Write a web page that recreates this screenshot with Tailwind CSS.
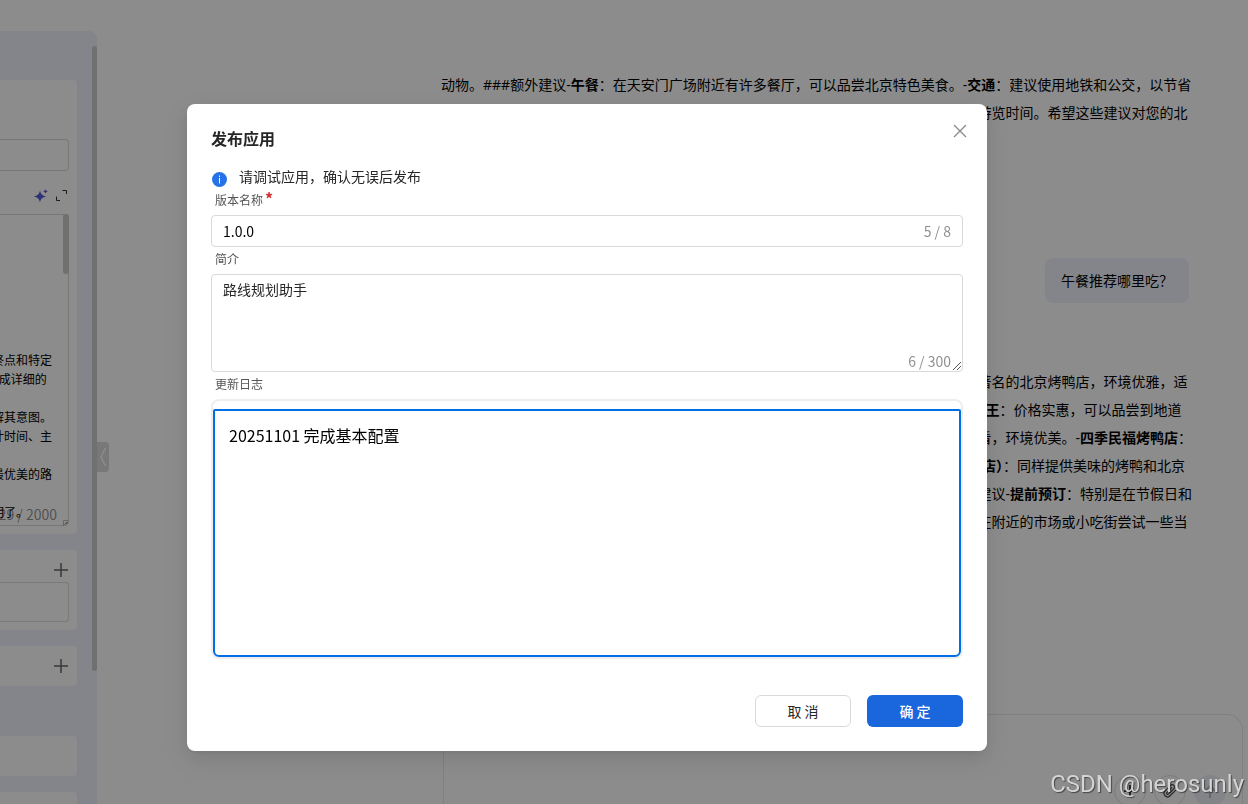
<!DOCTYPE html>
<html lang="zh-CN">
<head>
  <meta charset="UTF-8">
  <meta name="viewport" content="width=device-width, initial-scale=1.0">
  <title>发布应用</title>
  <script src="https://cdn.jsdelivr.net/npm/@tailwindcss/browser@4"></script>
</head>
<body class="h-screen overflow-hidden bg-white text-sm text-black font-['Noto_Sans_CJK_SC',sans-serif]">
  <div class="flex h-screen overflow-hidden">
    <!-- Sidebar -->
    <aside class="relative mt-[31px] w-[97px] shrink-0 rounded-tr-lg bg-[#f0f3fc]">
      <div class="flex h-full flex-col overflow-hidden pt-[49px] pr-5">
        <section class="shrink-0 rounded-r bg-white pt-[59px] pr-2 pb-2">
          <input type="text" aria-label="应用名称" class="block h-8 w-full rounded-r border border-l-0 border-[#d9d9d9]">
          <div class="flex h-[43px] items-center justify-end gap-2 pt-1.5">
            <button type="button" aria-label="智能优化">
              <svg class="size-[14px]" viewBox="0 0 14 14">
                <defs>
                  <linearGradient id="spark" x1="0" y1="0" x2="1" y2="0">
                    <stop offset="0" stop-color="#2f6bd8" />
                    <stop offset="1" stop-color="#7a4fd6" />
                  </linearGradient>
                </defs>
                <path fill="url(#spark)" d="M6 1.500c.8 3.600 2.200 5 6 6-3.800 1-5.200 2.400-6 6-.8-3.600-2.200-5-6-6 3.800-1 5.200-2.400 6-6zM11.500 0c.3 1.500.9 2 2.500 2.400-1.600.4-2.200.9-2.500 2.400-.3-1.500-.9-2-2.500-2.400C10.600 2 11.200 1.500 11.500 0z" />
              </svg>
            </button>
            <button type="button" aria-label="全屏" class="mr-0.5">
              <svg class="size-[11px]" viewBox="0 0 11 11" fill="none" stroke="#333" stroke-width="1">
                <path d="M6.500 .500h4v3.500M.500 6.500v4H4" />
              </svg>
            </button>
          </div>
          <div class="relative">
            <textarea aria-label="提示词" readonly spellcheck="false" class="-ml-8 block h-[312px] w-[101px] resize-none overflow-hidden rounded border border-[#d9d9d9] pt-[135px] pl-[11px] text-xs leading-[19px] whitespace-pre">起终点和特定
1生成详细的

理解其意图。
估计时间、主

择最优美的路

说明了。</textarea>
            <span class="absolute right-3 bottom-0.5 text-sm whitespace-nowrap text-black/45">29 / 2000</span>
            <span class="absolute top-0 right-0 h-[60px] w-1.5 rounded-full bg-[#ccc]"></span>
            <svg class="absolute right-0 bottom-0 size-1.5" viewBox="0 0 6 6"><path d="M.500 6V.500H6" fill="none" stroke="#bbb" /><path d="M2 4.500L4.500 2" stroke="#333" /></svg>
          </div>
        </section>

        <section class="mt-4 shrink-0 rounded-r bg-white pr-2 pb-2">
          <div class="flex h-8 items-start justify-end pt-3">
            <button type="button" aria-label="添加">
              <svg class="size-4" viewBox="0 0 16 16" stroke="#666" stroke-width="1.500"><path d="M8 1v14M1 8h14" /></svg>
            </button>
          </div>
          <div class="h-10 rounded-r border border-l-0 border-[#dedede]"></div>
        </section>

        <section class="mt-4 flex h-10 shrink-0 items-center justify-end rounded-r bg-white pr-2">
          <button type="button" aria-label="添加">
            <svg class="size-4" viewBox="0 0 16 16" stroke="#666" stroke-width="1.500"><path d="M8 1v14M1 8h14" /></svg>
          </button>
        </section>

        <section class="mt-[50px] h-10 shrink-0 rounded-r bg-white"></section>
        <section class="mt-4 h-10 shrink-0 rounded-r bg-white"></section>
      </div>

      <!-- scrollbar and collapse handle -->
      <span class="absolute top-[15px] right-0 h-[625px] w-[5px] rounded-full bg-[#ccc]"></span>
      <button type="button" aria-label="收起" class="absolute top-[411px] left-full flex h-[30px] w-3 items-center justify-center rounded-r bg-[#dadada]">
        <svg class="h-5 w-2" viewBox="0 0 8 20" fill="none" stroke="#fff" stroke-width="1.500"><path d="M6.500 1L2 10l4.500 9" /></svg>
      </button>
    </aside>

    <!-- Chat -->
    <main class="flex min-w-0 flex-1 flex-col pl-[344px]">
      <div class="min-h-0 flex-1 overflow-hidden pt-[71px] leading-7 whitespace-nowrap font-['Open_Sans','Noto_Sans_CJK_SC',sans-serif]">
        <div>
          <p>动物。###额外建议-<b>午餐</b>：在天安门广场附近有许多餐厅，可以品尝北京特色美食。-<b>交通</b>：建议使用地铁和公交，以节省</p>
          <p>时间并避免交通拥堵，出发前请查看当天线路。-预约：提前预约各景点门票，合理安排游览时间。希望这些建议对您的北</p>
        </div>
        <div class="mt-[131px] mr-[59px] flex justify-end">
          <p class="rounded-lg bg-[#f0f3fc] px-4 pt-[9px] pb-2">午餐推荐哪里吃？</p>
        </div>
        <div class="mt-[65px]">
          <p>天安门广场附近的午餐选择很多，以下几家餐厅都值得您品尝。-全聚德前门店：这里是著名的北京烤鸭店，环境优雅，适</p>
          <p>合全家人一起用餐，菜品丰富，服务周到，位置便利，步行可以到达前门大街1号。-<b>烤鸭王</b>：价格实惠，可以品尝到地道</p>
          <p>的北京风味，适合想要体验老北京美食的朋友。-大董烤鸭店：菜品精致讲究，摆盘也好看，环境优美。-<b>四季民福烤鸭店</b>：</p>
          <p>-口味正宗并且靠近故宫，可以一边用餐一边欣赏故宫周边的景色。-<b>便宜坊（前门鲜鱼口店）</b>：同样提供美味的烤鸭和北京</p>
          <p>传统小吃，性价比非常高，适合家庭和朋友聚餐时选择的老字号餐厅，值得推荐。-用餐建议-<b>提前预订</b>：特别是在节假日和</p>
          <p>周末的时候，热门餐厅往往需要排队等候很久。-尝试小吃：除了烤鸭之外，您也可以选在附近的市场或小吃街尝试一些当</p>
        </div>
      </div>

      <div class="mr-[5px] ml-0.5 flex h-[90px] shrink-0 items-start justify-end gap-2 overflow-hidden rounded-t-2xl border border-b-0 border-[#e9e9e9] pt-[60px] pr-4">
        <button type="button" aria-label="新建" class="flex size-8 items-center justify-center rounded-full border border-[#e2e2e2]">
          <svg class="size-3" viewBox="0 0 12 12" stroke="#444" stroke-width="2"><path d="M6 0v12M0 6h12" /></svg>
        </button>
        <button type="button" aria-label="附件" class="flex size-8 items-center justify-center rounded-full border border-[#e2e2e2]">
          <svg class="size-3.5" viewBox="0 0 24 24" fill="none" stroke="#444" stroke-width="2" stroke-linecap="round"><path d="M21.400 11l-9.200 9.200a6 6 0 01-8.500-8.500l9.200-9.200a4 4 0 015.700 5.700l-9.200 9.200a2 2 0 01-2.800-2.800l8.500-8.500" /></svg>
        </button>
        <button type="button" aria-label="发送" class="flex size-8 items-center justify-center rounded-full bg-[#eff1f6]">
          <svg class="size-3.5" viewBox="0 0 14 14" fill="none" stroke="#bbb" stroke-width="2"><path d="M7 14V2M2 7l5-5 5 5" /></svg>
        </button>
      </div>
    </main>
  </div>

  <!-- Modal -->
  <div class="fixed inset-0 flex items-start justify-center overflow-hidden bg-black/45 pt-[104px] pr-[74px]">
    <form role="dialog" aria-labelledby="modal-title" class="relative w-[800px] rounded-lg bg-white px-6 pt-[22px] pb-6 text-[#262626] shadow-[0_6px_16px_0_rgba(0,0,0,0.08),0_3px_6px_-4px_rgba(0,0,0,0.12),0_9px_28px_8px_rgba(0,0,0,0.05)]">
      <h1 id="modal-title" class="text-base leading-6 font-bold">发布应用</h1>
      <button type="button" aria-label="关闭" class="absolute top-5 right-5">
        <svg class="size-[14px]" viewBox="0 0 14 14" stroke="#8c8c8c" stroke-width="1.400"><path d="M1 1l12 12M13 1L1 13" /></svg>
      </button>

      <div class="mt-4 mb-0.5 flex h-5 items-center gap-3">
        <svg class="mt-1.5 ml-px size-[15px]" viewBox="0 0 15 15"><circle cx="7.500" cy="7.500" r="7.500" fill="#2673e8" /><path d="M7 3.500h1V5H7zM7 6h1v5.500H7z" fill="#fff" /></svg>
        <p class="leading-5">请调试应用，确认无误后发布</p>
      </div>

      <label for="version" class="block px-1 pt-0.5 pb-[5px] text-xs leading-5 text-[#555]">版本名称<span class="ml-0.5 text-base leading-none font-bold text-[#cf3030]">*</span></label>
      <div class="flex h-8 items-center rounded border border-[#d9d9d9] px-[11px]">
        <input id="version" type="text" value="1.0.0" class="min-w-0 flex-1 text-black outline-none">
        <span class="text-black/45">5 / 8</span>
      </div>

      <label for="intro" class="block px-1 pt-0.5 pb-[5px] text-xs leading-5 text-[#555]">简介</label>
      <div class="relative">
        <textarea id="intro" spellcheck="false" class="block h-[98px] w-full resize-none rounded border border-[#d9d9d9] px-[11px] py-[3px] leading-[22px] outline-none">路线规划助手</textarea>
        <span class="absolute right-3 bottom-0 leading-[22px] text-black/45">6 / 300</span>
        <svg class="absolute right-0.5 bottom-0.5 size-2" viewBox="0 0 8 8" stroke="#555"><path d="M0 8L8 0M4 8l4-4" /></svg>
      </div>

      <label for="log" class="block px-1 pt-0.5 pb-[5px] text-xs leading-5 text-[#555]">更新日志</label>
      <div class="rounded-lg border-2 border-[#eee] pt-2">
        <textarea id="log" spellcheck="false" class="block h-[248px] w-full resize-none rounded-t-xs rounded-b-md border-2 border-[#006fe6] px-3.5 py-3 text-base leading-6 text-black outline-none">20251101 完成基本配置</textarea>
      </div>

      <div class="mt-9 flex justify-end gap-4">
        <button type="button" class="h-8 w-24 rounded-md border border-[#d9d9d9] bg-white">取 消</button>
        <button type="submit" class="h-8 w-24 rounded-md bg-[#1a66dc] font-medium text-white">确 定</button>
      </div>
    </form>
  </div>

  <!-- Watermark -->
  <p class="fixed right-1 bottom-1 text-2xl leading-8 text-[#d4d4d4] font-[Roboto,sans-serif] text-shadow-[1px_1px_1px_rgb(0_0_0/0.5)]">CSDN @herosunly</p>
</body>
</html>
